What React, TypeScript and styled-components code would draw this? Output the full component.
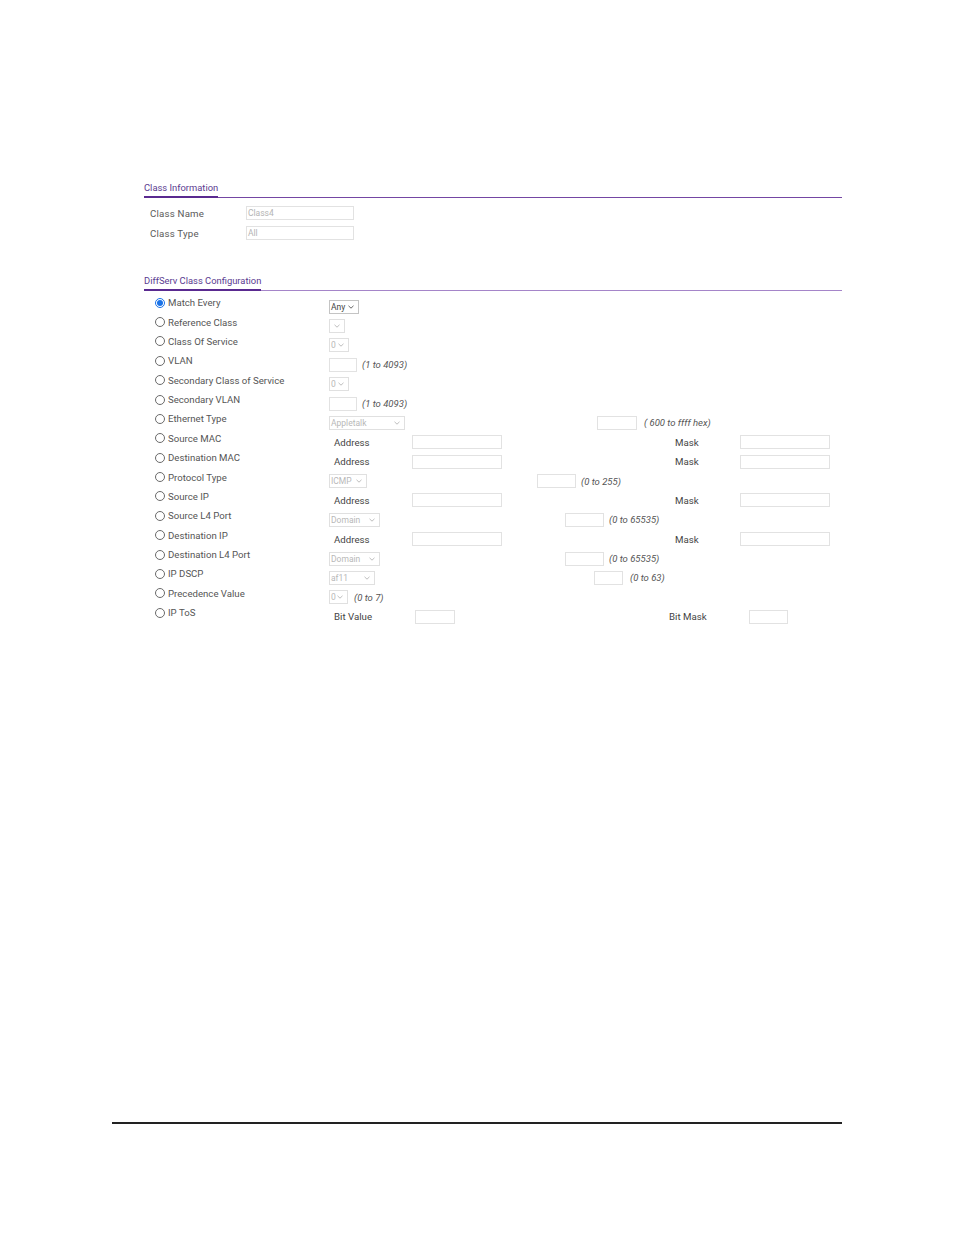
import React from "react";
import styled, { createGlobalStyle } from "styled-components";

const Global = createGlobalStyle`
  html, body { margin: 0; padding: 0; background: #fff; }
  body { font-family: Roboto, "Liberation Sans", Arial, sans-serif; }
`;

const Page = styled.div`
  width: 954px;
  height: 1235px;
  display: flex;
  flex-direction: column;
  box-sizing: border-box;
  padding-top: 182px;
`;

const Content = styled.div`
  margin-left: 144px;
  width: 698px;
  display: flex;
  flex-direction: column;
`;

const SectionHeader = styled.div<{ $line: string }>`
  display: flex;
  border-bottom: 1px solid ${(p) => p.$line};
`;

const SectionTitle = styled.span`
  font-size: 9.4px;
  line-height: 12px;
  color: #5a3a90;
  padding-bottom: 2px;
  border-bottom: 2px solid #5a2a90;
  margin-bottom: -1px;
`;

const InfoBody = styled.div`
  display: flex;
  flex-direction: column;
  gap: 6px;
  padding: 8px 0 0 6px;
`;

const InfoRow = styled.div`
  display: flex;
  align-items: center;
  height: 14px;
`;

const InfoLabel = styled.span`
  width: 96px;
  font-size: 9.7px;
  color: #5a5a5a;
  letter-spacing: 0.2px;
`;

const TextBox = styled.div<{ $w: number }>`
  width: ${(p) => p.$w}px;
  height: 14px;
  box-sizing: border-box;
  border: 1px solid #e2e2e2;
  font-size: 8.5px;
  line-height: 12px;
  color: #b4b4b4;
  padding-left: 1px;
  flex: none;
`;

const Section2 = styled.div`
  margin-top: 35px;
  display: flex;
  flex-direction: column;
`;

const ConfigBody = styled.div`
  display: flex;
  padding-top: 2px;
`;

const LeftCol = styled.div`
  width: 185px;
  display: flex;
  flex-direction: column;
`;

const RightCol = styled.div`
  flex: 1;
  display: flex;
  flex-direction: column;
  padding-top: 4px;
`;

const RadioRow = styled.label`
  height: 19.375px;
  display: flex;
  align-items: center;
  padding-left: 11px;
  gap: 3px;
  font-size: 9.65px;
  color: #555;
`;

const Radio = styled.span<{ $on?: boolean }>`
  width: 10px;
  height: 10px;
  box-sizing: border-box;
  border-radius: 50%;
  border: 1px solid ${(p) => (p.$on ? "#1a73e8" : "#6a6a6a")};
  display: flex;
  align-items: center;
  justify-content: center;
  flex: none;
  &::after {
    content: "";
    width: 6px;
    height: 6px;
    border-radius: 50%;
    background: ${(p) => (p.$on ? "#1a73e8" : "transparent")};
  }
`;

const CtrlRow = styled.div`
  height: 19.375px;
  display: flex;
  align-items: center;
`;

const Slot = styled.div<{ $w: number; $pl?: number }>`
  width: ${(p) => p.$w}px;
  padding-left: ${(p) => p.$pl ?? 0}px;
  box-sizing: border-box;
  flex: none;
  display: flex;
  align-items: center;
`;

const SelectBox = styled.div<{ $w: number; $active?: boolean }>`
  width: ${(p) => p.$w}px;
  height: 14px;
  box-sizing: border-box;
  border: 1px solid ${(p) => (p.$active ? "#c4c4c4" : "#e0e0e0")};
  display: flex;
  align-items: center;
  justify-content: space-between;
  padding: 0 4px 0 1px;
  font-size: 8.5px;
  color: ${(p) => (p.$active ? "#444" : "#b8b8b8")};
  flex: none;
`;

const Hint = styled.span<{ $gap: number }>`
  margin-left: ${(p) => p.$gap}px;
  font-size: 9.5px;
  font-style: italic;
  color: #555;
  white-space: nowrap;
`;

const FieldLabel = styled.span`
  font-size: 9.7px;
  color: #444;
`;

const Spacer = styled.div`
  flex: 1;
`;

const FooterRule = styled.div`
  margin: 0 0 111px 112px;
  width: 730px;
  height: 2px;
  background: #222;
`;

const Chevron = ({ dark }: { dark?: boolean }) => (
  <svg width="6" height="4" viewBox="0 0 6 4">
    <path d="M0.5 0.8 L3 3.2 L5.5 0.8" fill="none" stroke={dark ? "#555" : "#b5b5b5"} strokeWidth="0.9" />
  </svg>
);

const Select = ({ w, value = "", active }: { w: number; value?: string; active?: boolean }) => (
  <SelectBox $w={w} $active={active}>
    <span>{value}</span>
    <Chevron dark={active} />
  </SelectBox>
);

const AddrMask = () => (
  <CtrlRow>
    <Slot $w={83} $pl={5}>
      <FieldLabel>Address</FieldLabel>
    </Slot>
    <Slot $w={263}>
      <TextBox $w={90} />
    </Slot>
    <Slot $w={65}>
      <FieldLabel>Mask</FieldLabel>
    </Slot>
    <TextBox $w={90} />
  </CtrlRow>
);

const radios = [
  "Match Every",
  "Reference Class",
  "Class Of Service",
  "VLAN",
  "Secondary Class of Service",
  "Secondary VLAN",
  "Ethernet Type",
  "Source MAC",
  "Destination MAC",
  "Protocol Type",
  "Source IP",
  "Source L4 Port",
  "Destination IP",
  "Destination L4 Port",
  "IP DSCP",
  "Precedence Value",
  "IP ToS",
];

export default function App() {
  return (
    <Page>
      <Global />
      <Content>
        <SectionHeader $line="#7446a3">
          <SectionTitle>Class Information</SectionTitle>
        </SectionHeader>
        <InfoBody>
          <InfoRow>
            <InfoLabel>Class Name</InfoLabel>
            <TextBox $w={108}>Class4</TextBox>
          </InfoRow>
          <InfoRow>
            <InfoLabel>Class Type</InfoLabel>
            <TextBox $w={108}>All</TextBox>
          </InfoRow>
        </InfoBody>

        <Section2>
          <SectionHeader $line="#a585c9">
            <SectionTitle>DiffServ Class Configuration</SectionTitle>
          </SectionHeader>
          <ConfigBody>
            <LeftCol>
              {radios.map((r, i) => (
                <RadioRow key={r}>
                  <Radio $on={i === 0} />
                  <span>{r}</span>
                </RadioRow>
              ))}
            </LeftCol>
            <RightCol>
              <CtrlRow>
                <Select w={30} value="Any" active />
              </CtrlRow>
              <CtrlRow>
                <Select w={16} />
              </CtrlRow>
              <CtrlRow>
                <Select w={20} value="0" />
              </CtrlRow>
              <CtrlRow>
                <TextBox $w={28} />
                <Hint $gap={5}>(1 to 4093)</Hint>
              </CtrlRow>
              <CtrlRow>
                <Select w={20} value="0" />
              </CtrlRow>
              <CtrlRow>
                <TextBox $w={28} />
                <Hint $gap={5}>(1 to 4093)</Hint>
              </CtrlRow>
              <CtrlRow>
                <Slot $w={268}>
                  <Select w={76} value="Appletalk" />
                </Slot>
                <TextBox $w={40} />
                <Hint $gap={7}>( 600 to ffff hex)</Hint>
              </CtrlRow>
              <AddrMask />
              <AddrMask />
              <CtrlRow>
                <Slot $w={208}>
                  <Select w={38} value="ICMP" />
                </Slot>
                <TextBox $w={39} />
                <Hint $gap={5}>(0 to 255)</Hint>
              </CtrlRow>
              <AddrMask />
              <CtrlRow>
                <Slot $w={236}>
                  <Select w={51} value="Domain" />
                </Slot>
                <TextBox $w={39} />
                <Hint $gap={5}>(0 to 65535)</Hint>
              </CtrlRow>
              <AddrMask />
              <CtrlRow>
                <Slot $w={236}>
                  <Select w={51} value="Domain" />
                </Slot>
                <TextBox $w={39} />
                <Hint $gap={5}>(0 to 65535)</Hint>
              </CtrlRow>
              <CtrlRow>
                <Slot $w={265}>
                  <Select w={46} value="af11" />
                </Slot>
                <TextBox $w={29} />
                <Hint $gap={7}>(0 to 63)</Hint>
              </CtrlRow>
              <CtrlRow>
                <Select w={19} value="0" />
                <Hint $gap={6}>(0 to 7)</Hint>
              </CtrlRow>
              <CtrlRow>
                <Slot $w={86} $pl={5}>
                  <FieldLabel>Bit Value</FieldLabel>
                </Slot>
                <Slot $w={254}>
                  <TextBox $w={40} />
                </Slot>
                <Slot $w={80}>
                  <FieldLabel>Bit Mask</FieldLabel>
                </Slot>
                <TextBox $w={39} />
              </CtrlRow>
            </RightCol>
          </ConfigBody>
        </Section2>
      </Content>
      <Spacer />
      <FooterRule />
    </Page>
  );
}
